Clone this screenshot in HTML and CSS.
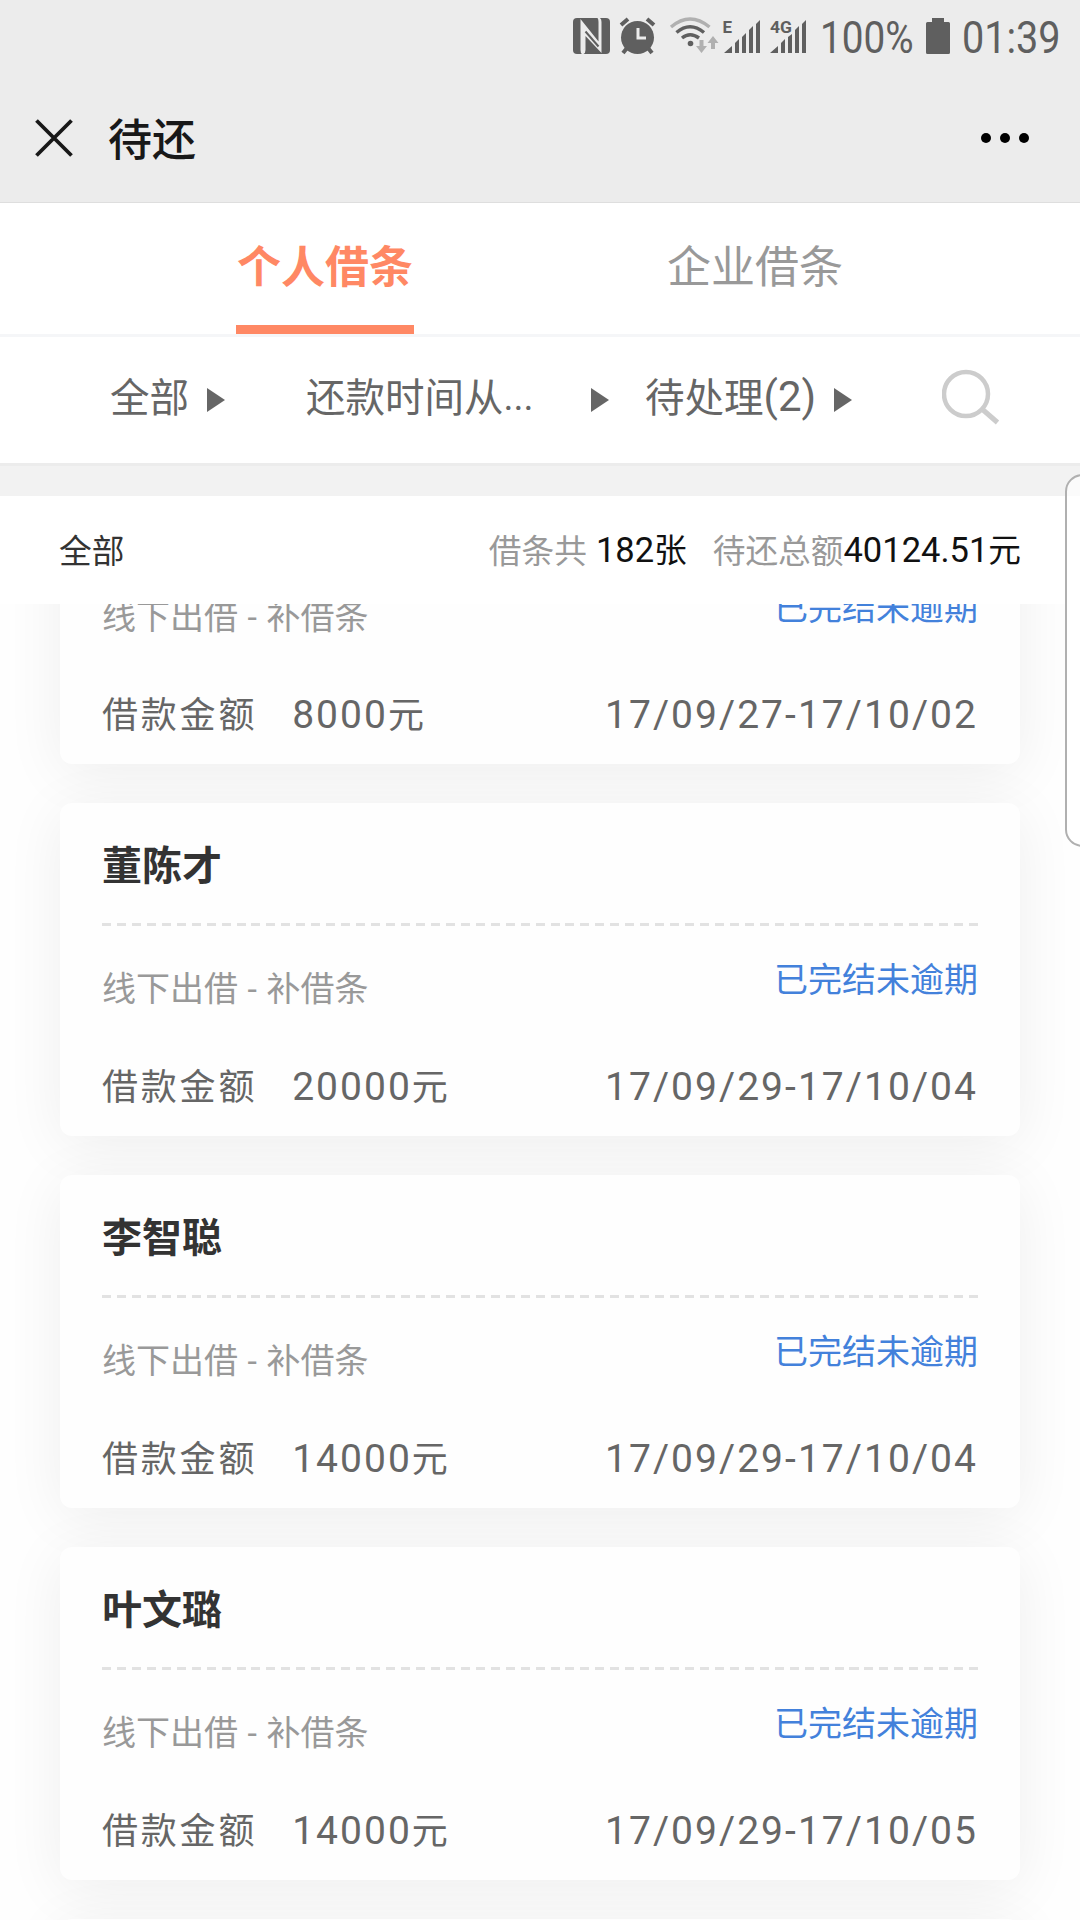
FILE: index.html
```html
<!DOCTYPE html>
<html lang="zh-CN">
<head>
  <meta charset="UTF-8" />
  <meta name="viewport" content="width=device-width, initial-scale=1.0"/>
  <title>待还</title>
  <link rel="stylesheet" href="styles.css">
</head>
<body>

  <!-- Status bar -->
  <div class="status-bar">
    <svg class="status-icons" width="240" height="48" viewBox="0 0 240 48">
      <!-- nfc -->
      <rect x="0" y="8" width="37" height="36" rx="4" fill="#5f5f5f"/>
      <path d="M7.500 9L25.500 31.500V12Q25.500 9 24.500 8H27Q28.500 9 28.500 12V43L12.500 26V40Q12.500 43 10.500 44H9Q7.500 43 7.500 40Z" fill="#ececec"/>
      <path d="M12.500 21.500L25.500 36.500" stroke="#5f5f5f" stroke-width="2"/>
      <!-- alarm -->
      <circle cx="64.500" cy="27.500" r="16.500" fill="#5f5f5f"/>
      <path d="M48 15l7-6M81 15l-7-6M54 38l-4 5M75 38l4 5" stroke="#5f5f5f" stroke-width="4" fill="none"/>
      <path d="M65 18v10h8" stroke="#ececec" stroke-width="3" fill="none"/>
      <!-- wifi -->
      <g fill="none" stroke-width="3.400">
        <path d="M98 17Q117 1 136.500 17" stroke="#b0b0b0"/>
        <path d="M103.500 22.500Q117 11 131 22.500" stroke="#5f5f5f"/>
        <path d="M109 28Q117 21.500 126 28" stroke="#5f5f5f"/>
      </g>
      <circle cx="117.500" cy="33.500" r="2.800" fill="#5f5f5f"/>
      <path d="M128.500 30v9M140 39v-9" stroke="#b0b0b0" stroke-width="4"/>
      <path d="M123 36h11l-5.500 7zM134.500 33h11l-5.500-7z" fill="#b0b0b0"/>
      <!-- sim 1 -->
      <text x="149.500" y="23" class="net" textLength="9.500" lengthAdjust="spacingAndGlyphs">E</text>
      <path d="M151 43L159 36V43zM162 33l4-4v14h-4zM169 27l4-4v20h-4zM176 20l4-4v27h-4zM183 14l4-4v33h-4z" fill="#5f5f5f"/>
      <!-- sim 2 -->
      <text x="197" y="23" class="net" textLength="22" lengthAdjust="spacingAndGlyphs">4G</text>
      <path d="M197 43L205 36V43zM208 33l4-4v14h-4zM215 27l4-3v19h-4zM222 20l4-4v27h-4zM229 14l4-4v33h-4z" fill="#5f5f5f"/>
    </svg>
    <span class="status-text battery-text">100%</span>
    <svg class="battery" width="24" height="36" viewBox="0 0 24 36">
      <path d="M6 0h12v4h4.500Q24 4 24 5.500V34.500Q24 36 22.500 36H1.500Q0 36 0 34.500V5.500Q0 4 1.500 4H6z" fill="#5f5f5f"/>
    </svg>
    <span class="status-text time-text">01:39</span>
  </div>

  <!-- Title bar -->
  <div class="title-bar">
    <svg class="close" width="38" height="38" viewBox="0 0 38 38">
      <path d="M1.500 1.500L36.500 36.500M36.500 1.500L1.500 36.500" stroke="#181818" stroke-width="3.800"/>
    </svg>
    <h1>待还</h1>
    <svg class="more" width="48" height="10" viewBox="0 0 48 10">
      <circle cx="5" cy="5" r="5"/>
      <circle cx="24" cy="5" r="5"/>
      <circle cx="43" cy="5" r="5"/>
    </svg>
  </div>

  <div class="tabs">
    <div class="tab active"><span>个人借条</span></div>
    <div class="tab"><span>企业借条</span></div>
  </div>

  <div class="filters">
    <div class="filter all">全部<i class="arrow"></i></div>
    <div class="filter date">还款时间从<span class="num dots">...</span><i class="arrow"></i></div>
    <div class="filter state">待处理<span class="num">(2)</span><i class="arrow"></i></div>
    <svg class="search" width="58" height="56" viewBox="0 0 58 56">
      <circle cx="24" cy="25" r="22" fill="none" stroke="#ccc" stroke-width="4.500"/>
      <path d="M40 40L55.500 53.500" stroke="#ccc" stroke-width="5"/>
    </svg>
  </div>

  <div class="summary">
    <span class="summary-name">全部</span>
    <span class="label">借条共</span>
    <span class="value count"><span class="num">182</span>张</span>
    <span class="label">待还总额</span>
    <span class="value"><span class="num">40124.51</span>元</span>
  </div>

  <div class="list">
    <div class="card">
      <div class="name"></div>
      <div class="row">
        <span class="type">线下出借<span class="dash">-</span>补借条</span>
        <span class="state-text">已完结未逾期</span>
      </div>
      <div class="row money">
        <span>借款金额</span>
        <span class="amount"><span class="num">8000</span>元</span>
        <span class="num period">17/09/27-17/10/02</span>
      </div>
    </div>

    <div class="card">
      <div class="name">董陈才</div>
      <div class="row">
        <span class="type">线下出借<span class="dash">-</span>补借条</span>
        <span class="state-text">已完结未逾期</span>
      </div>
      <div class="row money">
        <span>借款金额</span>
        <span class="amount"><span class="num">20000</span>元</span>
        <span class="num period">17/09/29-17/10/04</span>
      </div>
    </div>

    <div class="card">
      <div class="name">李智聪</div>
      <div class="row">
        <span class="type">线下出借<span class="dash">-</span>补借条</span>
        <span class="state-text">已完结未逾期</span>
      </div>
      <div class="row money">
        <span>借款金额</span>
        <span class="amount"><span class="num">14000</span>元</span>
        <span class="num period">17/09/29-17/10/04</span>
      </div>
    </div>

    <div class="card">
      <div class="name">叶文璐</div>
      <div class="row">
        <span class="type">线下出借<span class="dash">-</span>补借条</span>
        <span class="state-text">已完结未逾期</span>
      </div>
      <div class="row money">
        <span>借款金额</span>
        <span class="amount"><span class="num">14000</span>元</span>
        <span class="num period">17/09/29-17/10/05</span>
      </div>
    </div>

    <div class="card"></div>
  </div>

  <!-- Edge panel handle -->
  <div class="edge-panel"></div>

</body>
</html>
```
FILE: styles.css
```css
* {
  box-sizing: border-box;
}

body {
  margin: 0;
  position: relative;
  height: 1920px;
  overflow: hidden;
  display: flex;
  flex-direction: column;
  font-family: "Noto Sans CJK SC", sans-serif;
  background: #fefefe;
  color: #666;
}

span, .filter, h1 {
  white-space: nowrap;
}

.num {
  font-family: Roboto, sans-serif;
}

.status-bar {
  height: 72px;
  flex: none;
  display: flex;
  align-items: flex-start;
  padding: 10px 0 0 573px;
  background: #ececec;
  color: #5f5f5f;
}

.status-icons {
  flex: none;
}

.net {
  font: bold 17px Roboto, sans-serif;
  fill: #5f5f5f;
}

.status-text {
  padding-top: 1px;
  font-family: Roboto, sans-serif;
  font-size: 45px;
  line-height: 54px;
  transform: scaleX(0.86);
  transform-origin: left;
}

.battery-text {
  width: 104px;
  margin-left: 7px;
}

.battery {
  margin: 8px 0 0 2px;
}

.time-text {
  margin-left: 12px;
  transform: scaleX(0.88);
}

.title-bar {
  height: 131px;
  flex: none;
  display: flex;
  align-items: center;
  padding: 1px 51px 0 35px;
  background: #ececec;
  border-bottom: 1px solid #dedede;
}

h1 {
  flex: 1;
  margin: 0 0 2px 35px;
  font-size: 44px;
  font-weight: 500;
  line-height: 60px;
  color: #181818;
}

.tabs {
  height: 134px;
  flex: none;
  display: flex;
  padding: 0 110px;
  background: #fff;
  border-bottom: 3px solid #f5f6f8;
}

.tab {
  flex: 1;
  display: flex;
  justify-content: center;
  font-size: 44px;
  line-height: 122px;
  color: #999;
}

.tab.active span {
  padding: 0 1px;
  font-weight: bold;
  color: #ff8864;
  border-bottom: 9px solid #ff8864;
}

.filters {
  height: 129px;
  flex: none;
  display: flex;
  align-items: center;
  padding: 0 0 6px 110px;
  background: #fff;
  border-bottom: 3px solid #ececec;
  font-size: 39.5px;
  line-height: 60px;
}

.filter {
  display: flex;
  align-items: center;
  margin-top: -4px;
}

.all {
  width: 196px;
}

.date {
  width: 339px;
}

.state {
  width: 297px;
}

.arrow {
  margin-top: 9px;
  margin-left: 18px;
  border-left: 18px solid #666;
  border-top: 12px solid transparent;
  border-bottom: 12px solid transparent;
}

.date .arrow {
  margin-left: auto;
  margin-right: 36px;
}

.filters .num {
  padding-top: 4px;
  font-size: 42px;
}

.filters .dots {
  font-size: 38px;
}

.summary {
  height: 138px;
  flex: none;
  display: flex;
  align-items: center;
  padding: 0 59px 3px;
  border-top: 30px solid #f2f2f2;
  background: #fff;
  font-size: 32.7px;
  line-height: 48px;
}

.summary-name {
  flex: 1;
  color: #333;
}

.summary .label {
  color: #999;
}

.summary .value {
  color: #111;
}

.summary .num {
  font-size: 34.5px;
}

.count {
  margin: 0 26px 0 9px;
}

.list {
  flex: 1;
  min-height: 0;
  overflow: hidden;
  padding: 0 60px;
}

.card {
  height: 333px;
  margin-bottom: 39px;
  padding: 0 42px;
  border-radius: 12px;
  background: #fefefe;
  box-shadow: 0 9px 60px rgba(0, 0, 0, 0.065);
}

/* the list is scrolled part way through the first card */
.card:first-child {
  margin-top: -173px;
}

.name {
  height: 123px;
  padding-top: 30px;
  font-size: 40px;
  font-weight: bold;
  line-height: 60px;
  color: #333;
  background: repeating-linear-gradient(to right, #e2e2e2 0 9px, transparent 9px 14.95px) left bottom / 100% 3px no-repeat;
}

.row {
  display: flex;
  justify-content: space-between;
  font-size: 34px;
  line-height: 50px;
}

.type {
  padding-top: 36px;
  color: #999;
}

.dash {
  margin: 0 9.5px;
  font-family: Roboto, sans-serif;
}

.state-text {
  padding-top: 27px;
  color: #4381db;
}

.money {
  justify-content: flex-start;
  align-items: center;
  height: 50px;
  margin-top: 45px;
  font-size: 36px;
  letter-spacing: 2.8px;
}

.money .num {
  font-size: 39px;
  letter-spacing: 2px;
}

.amount {
  margin-left: 35px;
  padding-top: 3px;
}

.money .period {
  margin-left: auto;
  padding-top: 5px;
  letter-spacing: 2.05px;
}

.edge-panel {
  position: absolute;
  top: 474px;
  right: -20px;
  width: 35px;
  height: 373px;
  border: 2px solid #b0b0b0;
  border-radius: 20px;
  background: rgba(255, 255, 255, 0.7);
}
```
